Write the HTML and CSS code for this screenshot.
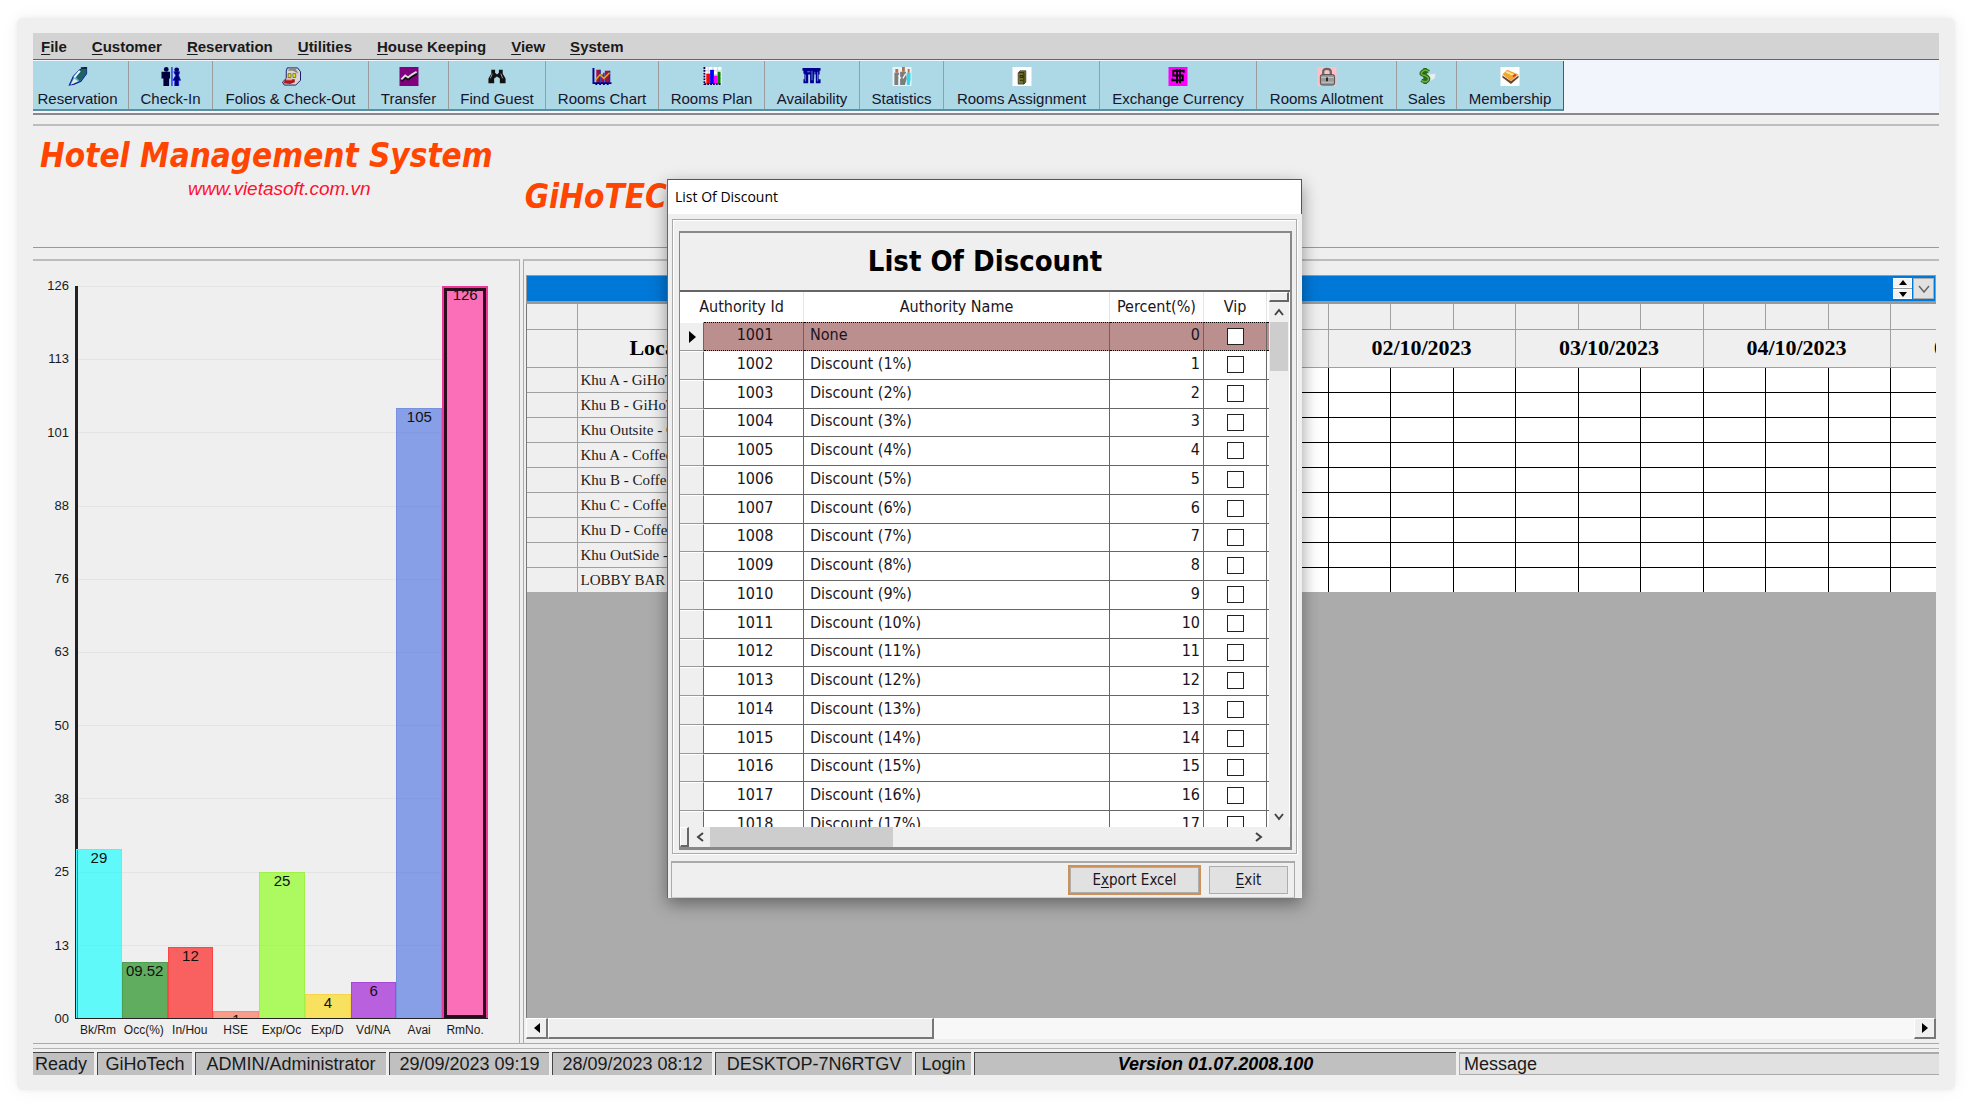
FILE: index.html
```html
<!DOCTYPE html>
<html lang="en">
<head>
<meta charset="utf-8">
<title>Hotel Management System</title>
<link rel="stylesheet" href="styles.css">
</head>
<body>
<div class="frame">
  <nav class="menubar">
    <a href="#"><u>F</u>ile</a><a href="#"><u>C</u>ustomer</a><a href="#"><u>R</u>eservation</a><a href="#"><u>U</u>tilities</a><a href="#"><u>H</u>ouse Keeping</a><a href="#"><u>V</u>iew</a><a href="#"><u>S</u>ystem</a>
  </nav>
  <div class="toolbar-row">
    <div class="toolbar">
      <button type="button">
        <svg viewBox="0 0 20 20"><path d="M1 19L5 10L12 3L19 0V7L13 15L6 18Z" fill="#5fb5bd" stroke="#0a1a9a" stroke-width="1.2"/><path d="M11 4L19 0V7L12 15L8 11Z" fill="#1f5f66"/><path d="M6 11L12 4" stroke="#e8ffff" stroke-width="2"/><path d="M6 12L10 15L2 19Z" fill="#e8e8e8"/><path d="M13 1H19" stroke="#111" stroke-width="1.5"/></svg>
        Reservation</button>
      <button type="button">
        <svg viewBox="0 0 20 20"><circle cx="5" cy="2.500" r="2.500" fill="#00004a"/><path d="M0 5H9V12H8V20H2V12H0Z" fill="#00003a"/><path d="M11 0V20" stroke="#0a0aff" stroke-width="1.200"/><circle cx="16" cy="3" r="2.500" fill="#00006a"/><path d="M13 5H19L18 9L20 14H18V20H14V14H12L15 9Z" fill="#00006a" stroke="#0a0ae0" stroke-width=".8"/></svg>
        Check-In</button>
      <button type="button">
        <svg viewBox="0 0 20 20"><path d="M6 1H17L20 5V14L15 19H3L1 16L5 12V4Z" fill="#d8d8d0" stroke="#15156a"/><path d="M6 4L10 1L15 2L18 7L12 4Z" fill="#8a8a80"/><path d="M7 7H10V11H7ZM12 7H15V11H12Z" fill="#e8e020" stroke="#333" stroke-width=".6"/><path d="M4 13H14V16L9 18L2 17Z" fill="#b01818"/><path d="M5 12H11V14H5Z" fill="#e8a0a0"/></svg>
        Folios &amp; Check-Out</button>
      <button type="button">
        <svg viewBox="0 0 20 20"><path d="M0 0H20V20H0Z" fill="#800080"/><path d="M2 15L6 11L9 13L13 10L18 7" fill="none" stroke="#111" stroke-width="2.500"/><path d="M2 13L6 9L9 11L13 8L18 5" fill="none" stroke="#ddd" stroke-width="2"/></svg>
        Transfer</button>
      <button type="button">
        <svg viewBox="0 0 20 20"><path d="M4 3H8V6L10 8L12 6V3H16V7L19 12V17H13V12L10 10L7 12V17H1V12L4 7Z" fill="#111"/><path d="M5 7L3 12M14 7L16 12" stroke="#8fa6ae" stroke-width="1"/></svg>
        Find Guest</button>
      <button type="button">
        <svg viewBox="0 0 20 20"><path d="M4 3H8V17H4ZM9 8H12V17H9ZM13 4H18V17H13Z" fill="#a01040"/><path d="M1 1V17H20M4 17V19M8 17V19M12 17V19M16 17V19" fill="none" stroke="#000090" stroke-width="2"/><path d="M8 3V16M12 6V16M18 4V16" stroke="#2828a0" stroke-width="1.500"/><path d="M3 14L8 8L12 12L18 6" fill="none" stroke="#e8a020" stroke-width="1.600"/></svg>
        Rooms Chart</button>
      <button type="button">
        <svg viewBox="0 0 20 20"><path d="M1 0H20V19H1Z" fill="#fff"/><path d="M1 4H20M1 8H20M1 12H20M6 0V18M11 0V18M16 0V18" stroke="#d0d0d0"/><path d="M4 7H8V18H4Z" fill="#f00"/><path d="M8 3H12V18H8Z" fill="#00f"/><path d="M12 9H16V18H12Z" fill="#f0f"/><path d="M16 5H19V18H16Z" fill="#008000"/><path d="M2 0V19M2 18H20" fill="none" stroke="#000050" stroke-width="2" stroke-dasharray="2 1"/></svg>
        Rooms Plan</button>
      <button type="button">
        <svg viewBox="0 0 20 20"><path d="M0 1H19V4H18V8H17V13H19V17H14V8H12V17H8V8H6V17H1V13H2V7H1V4H0Z" fill="#000090"/><path d="M5 5H8M3 8V15M10 4V14M13 5V12M16 5V15" stroke="#6a86d0" stroke-width="1"/></svg>
        Availability</button>
      <button type="button">
        <svg viewBox="0 0 20 20"><path d="M0 0H20V20H0Z" fill="#e8f4f8"/><path d="M2 6H7L6 13V19H2ZM8 5H14L15 12L13 19H8Z" fill="#7d7d7d"/><path d="M15 6H19V13L18 19H15Z" fill="#30d8e8"/><path d="M3 2H6V6H3ZM10 0H13V5H10ZM16 2H18V6H16Z" fill="#b07050"/><path d="M6 9L9 12M14 7L11 12" stroke="#fff" stroke-width="1.200"/></svg>
        Statistics</button>
      <button type="button">
        <svg viewBox="0 0 20 20"><path d="M0 0H20V20H0Z" fill="#fff"/><path d="M6 6L8 4H14V16L12 18H6Z" fill="#777522" stroke="#333" stroke-width=".8"/><path d="M7 6H12V18M8 9H11V11H8ZM8 14H11" fill="none" stroke="#22220a"/></svg>
        Rooms Assignment</button>
      <button type="button">
        <svg viewBox="0 0 20 20"><path d="M0 0H20V20H0Z" fill="#f0f"/><path d="M16 6V4H5V9H15V14H4V12M9 2V17M12 2V17" fill="none" stroke="#000" stroke-width="2"/></svg>
        Exchange Currency</button>
      <button type="button">
        <svg viewBox="0 0 20 20"><path d="M0 0H20V20H0Z" fill="#ffc0c8"/><path d="M6 9V5Q6 2 10 2T14 5V9" fill="none" stroke="#666" stroke-width="2.400"/><rect x="3" y="8" width="15" height="11" rx="2" fill="#999" stroke="#4a4a4a"/><path d="M4 11H17M4 16H17" stroke="#c8c8c8"/><path d="M10 11V15" stroke="#222" stroke-width="2"/></svg>
        Rooms Allotment</button>
      <button type="button">
        <svg viewBox="0 0 20 20"><path d="M11 8L19 7L18 12L13 15Z" fill="#e8eef0"/><path d="M12 5Q8 2 5 5T8 9Q13 11 11 14T4 14M8 1V18" fill="none" stroke="#2d6a18" stroke-width="3.800"/><path d="M12 5Q8 2 5 5T8 9Q13 11 11 14T4 14" fill="none" stroke="#6ab848" stroke-width="1.500"/></svg>
        Sales</button>
      <button type="button">
        <svg viewBox="0 0 20 20"><path d="M0 0H20V20H0Z" fill="#fff"/><path d="M2 11L11 18L19 11V9L11 15L2 9Z" fill="#6a4030"/><path d="M2 8L7 3L19 8L11 15Z" fill="#f0a830"/><path d="M6 5L15 9" stroke="#ffe8a0" stroke-width="2"/><path d="M13 10L16 8" stroke="#e03020" stroke-width="2"/></svg>
        Membership</button>
    </div>
  </div>

  <header class="banner">
    <div class="brand">
      <h1>Hotel Management System</h1>
      <a href="#">www.vietasoft.com.vn</a>
    </div>
    <div class="site-name">GiHoTECH</div>
  </header>

  <main class="workspace">
    <section class="chart">
      <div class="scale">
        <span>126</span><span>113</span><span>101</span><span>88</span><span>76</span><span>63</span><span>50</span><span>38</span><span>25</span><span>13</span><span>00</span>
      </div>
      <div class="plot">
        <div class="gridlines"><i></i><i></i><i></i><i></i><i></i><i></i><i></i><i></i><i></i><i></i></div>
        <div class="bars">
          <div class="col cyan" style="--v:29"><b>29</b></div>
          <div class="col green" style="--v:9.52"><b>09.52</b></div>
          <div class="col red" style="--v:12"><b>12</b></div>
          <div class="col salmon" style="--v:1"><b>1</b></div>
          <div class="col lime" style="--v:25"><b>25</b></div>
          <div class="col yellow" style="--v:4"><b>4</b></div>
          <div class="col purple" style="--v:6"><b>6</b></div>
          <div class="col blue" style="--v:105"><b>105</b></div>
          <div class="col pink" style="--v:126"><b>126</b></div>
        </div>
      </div>
      <div class="names">
        <span>Bk/Rm</span><span>Occ(%)</span><span>In/Hou</span><span>HSE</span><span>Exp/Oc</span><span>Exp/D</span><span>Vd/NA</span><span>Avai</span><span>RmNo.</span>
      </div>
    </section>

    <section class="schedule">
      <div class="caption">
        <div class="spin"><button type="button" aria-label="Previous"><svg viewBox="0 0 8 6"><path d="M4 0L8 5H0Z"/></svg></button><button type="button" aria-label="Next"><svg viewBox="0 0 8 6"><path d="M4 6L8 1H0Z"/></svg></button></div>
        <button type="button" class="drop" aria-label="Open list"><svg viewBox="0 0 12 8"><path d="M1 1L6 7L11 1" fill="none" stroke="#666" stroke-width="1.500"/></svg></button>
      </div>
      <div class="sheet">
        <table class="rooms">
          <colgroup id="room-cols"><col class="mark"><col class="place"></colgroup>
          <thead id="room-head"></thead>
          <tbody id="room-body"></tbody>
        </table>
      </div>
      <div class="hscroll">
        <button type="button" aria-label="Scroll left"><svg viewBox="0 0 6 10"><path d="M6 0V10L0 5Z"/></svg></button>
        <div class="thumb"></div>
        <button type="button" class="end" aria-label="Scroll right"><svg viewBox="0 0 6 10"><path d="M0 0V10L6 5Z"/></svg></button>
      </div>
    </section>
  </main>

  <footer class="status">
    <span class="ready">Ready</span><span>GiHoTech</span><span>ADMIN/Administrator</span><span>29/09/2023 09:19</span><span>28/09/2023 08:12</span><span>DESKTOP-7N6RTGV</span><span>Login</span><span class="version">Version 01.07.2008.100</span><span class="message">Message</span>
  </footer>
</div>

<section class="dialog" role="dialog" aria-label="List Of Discount">
  <div class="titlebar">List Of Discount</div>
  <div class="panel">
    <div class="box">
      <h2>List Of Discount</h2>
      <div class="listing">
        <div class="rows">
          <table class="discounts">
            <colgroup><col class="c-mark"><col class="c-id"><col class="c-name"><col class="c-pct"><col class="c-vip"><col class="c-rest"></colgroup>
            <thead><tr><th colspan="2">Authority Id</th><th>Authority Name</th><th>Percent(%)</th><th>Vip</th><th></th></tr></thead>
            <tbody id="discount-body"></tbody>
          </table>
        </div>
        <div class="vbar">
          <div class="split"></div>
          <button type="button" aria-label="Scroll up"><svg viewBox="0 0 10 8"><path d="M1 7L5 2L9 7" /></svg></button>
          <div class="vthumb"></div>
          <button type="button" class="down" aria-label="Scroll down"><svg viewBox="0 0 10 8"><path d="M1 1L5 6L9 1" /></svg></button>
        </div>
      </div>
      <div class="hbar">
        <div class="split"></div>
        <button type="button" aria-label="Scroll left"><svg viewBox="0 0 8 10"><path d="M7 1L2 5L7 9" /></svg></button>
        <div class="hthumb"></div>
        <button type="button" class="far" aria-label="Scroll right"><svg viewBox="0 0 8 10"><path d="M1 1L6 5L1 9" /></svg></button>
      </div>
    </div>
  </div>
  <div class="actions">
    <button type="button" class="primary">E<u>x</u>port Excel</button>
    <button type="button"><u>E</u>xit</button>
  </div>
</section>
<script src="script.js"></script>
</body>
</html>
```
FILE: styles.css
```css
* { box-sizing: border-box; }
body {
  margin: 0;
  padding: 18px 17px;
  background: #fff;
  color: #1a1a1a;
  font: 15px/20px "Liberation Sans", Arial, sans-serif;
  position: relative;
}
button { font: inherit; color: inherit; padding: 0; margin: 0; border: 0; background: none; }
a { color: inherit; text-decoration: none; }
svg { display: block; }

.frame {
  display: flex;
  flex-direction: column;
  min-height: calc(100vh - 36px);
  padding: 15px 16px;
  background: #efefef;
  border-radius: 6px;
  box-shadow: 0 0 4px #efefef, 0 0 18px #f2f2f2;
}

/* menu and toolbar */
.menubar {
  display: flex;
  gap: 25px;
  height: 27px;
  padding: 4px 8px 0;
  background: #d3d3d3;
  border-bottom: 1px solid #666;
  font-weight: bold;
}
u { text-underline-offset: 2px; }
.toolbar-row {
  display: flex;
  background: #f2f6fc;
  border-bottom: 2px solid #888;
  padding: 1px 0 2px;
}
.toolbar {
  display: grid;
  grid-template-columns: 96px 84px 156px 80px 97px 113px 106px 95px 84px 156px 157px 140px 60px 106px;
  background: #add8e6;
  border-bottom: 2px solid #5c8ea2;
  border-right: 1px solid #34627a;
}
.toolbar button {
  display: flex;
  flex-direction: column;
  align-items: center;
  gap: 3px;
  height: 48px;
  padding: 6px 0 0;
  border-right: 1px solid #9c9c9c;
  white-space: nowrap;
  color: #14142c;
}
.toolbar button:first-child { padding-right: 6px; }
.toolbar button:last-child { border-right: 0; }
.toolbar svg { width: 20px; height: 20px; }

/* banner */
.banner {
  display: flex;
  gap: 32px;
  height: 124px;
  margin-top: 9px;
  padding: 12px 7px;
  border-top: 2px solid #bdbdbd;
  border-bottom: 1px solid #999;
  color: #ff4500;
}
.brand { display: flex; flex-direction: column; align-items: flex-start; }
.brand h1, .site-name {
  margin: 0;
  font: italic bold 33px/36px "DejaVu Sans Condensed", Tahoma, sans-serif;
  white-space: nowrap;
}
.brand a { padding-left: 148px; color: #ff1030; font-size: 19px; line-height: 30px; font-style: italic; }
.site-name { padding-top: 41px; }

/* workspace */
.workspace {
  flex: 1;
  display: grid;
  grid-template-columns: 487px minmax(0, 1fr);
  gap: 3px;
  margin-top: 11px;
  border-bottom: 1px solid #a8a8a8;
}
.chart {
  display: grid;
  grid-template-columns: 36px 1fr;
  grid-template-rows: 1fr 20px;
  column-gap: 6px;
  padding: 25px 31px 4px 0;
  border-top: 2px solid #bdbdbd;
  border-right: 1px solid #aaa;
}
.scale {
  display: flex;
  flex-direction: column;
  justify-content: space-between;
  margin: -7px 0;
  font-size: 13px;
  line-height: 14px;
  text-align: right;
}
.plot { display: grid; border-left: 3px solid #222; border-bottom: 1px solid #222; }
.gridlines, .bars { grid-area: 1 / 1; display: flex; }
.gridlines { flex-direction: column; }
.gridlines i { flex: 1; border-top: 1px solid #e4e4e4; }
.bars { margin-left: -2px; }
.col { flex: 1 1 0; min-width: 0; display: flex; flex-direction: column; }
.col::before { content: ""; flex: calc(126 - var(--v)) 1 0; }
.col b {
  flex: var(--v) 1 0;
  min-height: 0;
  overflow: hidden;
  font-weight: normal;
  text-align: center;
  line-height: 16px;
  color: #111;
  border: 1px solid transparent;
  border-bottom: 0;
}
.cyan b { background: rgba(0, 255, 255, .6); border-color: #4ff4f8; }
.green b { background: rgba(0, 128, 0, .6); border-color: #4d9c50; }
.red b { background: rgba(255, 0, 0, .6); border-color: #fb4545; }
.salmon b { background: rgba(255, 100, 70, .6); border-color: #f58a78; }
.lime b { background: rgba(127, 255, 0, .6); border-color: #a0f048; }
.yellow b { background: rgba(255, 215, 0, .6); border-color: #f8d448; }
.purple b { background: rgba(148, 0, 211, .6); border-color: #a848d8; }
.blue b { background: rgba(65, 105, 225, .6); border-color: #7890e0; }
.pink b { background: #fb6eb8; border: 2px solid #f0389a; border-bottom: 0; box-shadow: inset 0 0 0 3px #2a0a1c; line-height: 14px; }
.names { grid-column: 2; display: flex; padding: 2px 0 0; }
.names span { flex: 1 1 0; min-width: 0; text-align: center; font-size: 12px; line-height: 18px; white-space: nowrap; }

/* schedule */
.schedule {
  display: flex;
  flex-direction: column;
  min-width: 0;
  padding: 14px 3px 4px 2px;
  border-top: 2px solid #bdbdbd;
  border-left: 1px solid #aaa;
}
.caption {
  display: flex;
  justify-content: flex-end;
  height: 29px;
  padding: 2px 1px;
  background: #0078d7;
  border: 1px solid #999;
  border-bottom: 3px solid #999;
}
.spin { display: grid; width: 19px; gap: 1px; background: #999; }
.spin button { display: grid; place-items: center; background: #f2f2f2; border: 1px solid #fff; }
.spin svg { width: 8px; height: 6px; }
.drop { display: grid; place-items: center; width: 21px; margin-left: 1px; background: #e1e1e1; border: 1px solid #adadad; }
.drop svg { width: 12px; height: 8px; }
.sheet { flex: 1; overflow: hidden; background: #ababab; border-left: 1px solid #777; min-height: 300px; }
.rooms {
  table-layout: fixed;
  width: 1551px;
  border-collapse: collapse;
  font: 15px/24px "Liberation Serif", "Times New Roman", serif;
}
.mark { width: 50px; }
.place { width: 188px; }
.slot-a { width: 63px; }
.slot-b { width: 62px; }
.rooms th, .rooms td { padding: 0; height: 25px; white-space: nowrap; overflow: hidden; }
.rooms th { background: #efefef; border: solid #a0a0a0; border-width: 0 1px 1px 0; font-weight: normal; }
.rooms tbody th { text-align: left; padding-left: 3px; }
.rooms thead tr + tr th { height: 38px; font-size: 22px; font-weight: bold; color: #000; }
.rooms td { background: #fff; border: solid #000; border-width: 0 1px 1px 0; }
.rooms tbody tr:last-child > * { border-bottom: 0; }
.hscroll { display: flex; height: 21px; background: #f8f8f8; }
.hscroll button, .thumb { background: #efefef; border: 1px solid #fff; border-right: 2px solid #777; border-bottom: 2px solid #777; }
.hscroll button { width: 22px; display: grid; place-items: center; }
.hscroll svg { width: 6px; height: 10px; }
.thumb { flex: 0 0 386px; }
.hscroll .end { margin-left: auto; }

/* status bar */
.status {
  display: grid;
  grid-template-columns: 61px 95px 191px 160px 160px 197px 56px 482px minmax(0, 1fr);
  gap: 3px;
  margin-top: 4px;
  padding-top: 3px;
  border-top: 1px solid #b4b4b4;
  font-size: 18px;
  line-height: 22px;
}
.status span {
  background: #c0c0c0;
  border-top: 1px solid #444;
  border-left: 1px solid #444;
  height: 23px;
  text-align: center;
  white-space: nowrap;
}
.status .ready { text-align: left; padding-left: 2px; border-left: 0; }
.status .version { font-weight: bold; font-style: italic; color: #000; }
.status .message { text-align: left; padding-left: 4px; background: #e1e1e1; border: 1px solid #aaa; border-top-width: 2px; border-right: 0; line-height: 21px; }

/* dialog */
.dialog {
  position: absolute;
  top: 179px;
  left: calc(50% - 319px);
  width: 635px;
  background: #efefef;
  border-left: 1px solid #666;
  box-shadow: 0 6px 16px rgba(0, 0, 0, .4);
  font: 16px/20px "DejaVu Sans Condensed", Tahoma, sans-serif;
  color: #1a1420;
}
.titlebar {
  height: 35px;
  padding: 7px 7px;
  background: #fff;
  border-top: 1px solid #555;
  border-right: 1px solid #555;
  font: 14px/20px "Open Sans", "Segoe UI", sans-serif;
  color: #000;
}
.panel { margin: 5px 5px 0 4px; padding: 11px 4px 3px 6px; border: 1px solid #aaa; box-shadow: inset 1px 1px #fff, 1px 1px #fff; }
.box { border: 2px solid #888; border-width: 2px 2px 3px 1px; }
.box h2 {
  margin: 0;
  height: 59px;
  border-bottom: 2px solid #666;
  font: bold 29px/56px "DejaVu Sans Condensed", Tahoma, sans-serif;
  text-align: center;
  color: #000;
}
.listing { display: flex; height: 535px; }
.rows { flex: 1; overflow: hidden; background: #fff; }
.discounts { table-layout: fixed; width: 100%; border-collapse: separate; border-spacing: 0; }
.c-mark { width: 24px; }
.c-id { width: 100px; }
.c-name { width: 306px; }
.c-pct { width: 94px; }
.c-vip { width: 63px; }
.discounts th { height: 30px; padding: 0; font-weight: normal; border-right: 1px solid #e4e4e4; white-space: nowrap; }
.discounts th:last-child { border: 0; }
.discounts td { height: 29px; padding: 0 0 3px; line-height: 20px; border-right: 1px solid #666; border-bottom: 1px solid #666; white-space: nowrap; }
.discounts tbody tr:nth-child(4n) td { height: 28px; }
.discounts td:first-child { background: #efefef; border-bottom-color: #999; border-top: 1px solid #fff; }
.discounts td:nth-child(2) { text-align: center; padding-left: 3px; }
.discounts td:nth-child(3) { padding-left: 6px; }
.discounts td:nth-child(4) { text-align: right; padding-right: 3px; }
.discounts td:nth-child(5) { padding-bottom: 0; }
.discounts td:last-child { border-right: 0; }
.discounts .current td { background: #bc8f8f; border-top: 1px dotted #000; border-bottom: 1px dotted #000; }
.discounts .current td:first-child { background: #efefef; border-top: 1px solid #fff; border-bottom: 1px solid #999; padding: 0; }
.current svg { width: 7px; height: 12px; margin-left: 9px; }
.discounts input { appearance: none; display: block; width: 17px; height: 17px; margin: 0 auto 1px; background: #fff; border: 1px solid #222; }
.vbar { display: flex; flex-direction: column; width: 21px; background: #efefef; border-right: 1px solid #fff; }
.vbar button, .hbar button { display: grid; place-items: center; }
.dialog svg path { fill: none; stroke: #444; stroke-width: 2; }
.dialog .current svg path { fill: #000; stroke: none; }
.vbar .split { height: 10px; background: #efefef; border: 1px solid #fff; border-right: 2px solid #666; border-bottom: 2px solid #666; }
.vbar button { height: 20px; }
.vbar svg { width: 10px; height: 8px; }
.vthumb { height: 49px; margin: 0 1px; background: #cdcdcd; }
.vbar .down { margin-top: auto; }
.hbar { display: flex; height: 20px; }
.hbar .split { width: 9px; border: 1px solid #fff; border-right: 2px solid #666; border-bottom: 2px solid #666; }
.hbar button { width: 21px; }
.hbar svg { width: 8px; height: 10px; }
.hthumb { width: 183px; background: #cdcdcd; }
.hbar .far { margin-left: auto; margin-right: 21px; }
.actions {
  display: flex;
  justify-content: flex-end;
  align-items: center;
  gap: 8px;
  height: 37px;
  margin: 7px 7px 0 3px;
  padding: 0 6px;
  border: 1px solid #aaa;
  border-top-width: 2px;
  border-bottom-color: #ccc;
  font-size: 15px;
}
.actions button { width: 79px; height: 28px; background: #e1e1e1; border: 1px solid #adadad; }
.actions .primary { width: 133px; height: 30px; border: 2px solid #cf9157; box-shadow: inset 0 0 0 1px #adadad; }
```
FILE: script.js
```js
const places = ["Khu A - GiHoTech", "Khu B - GiHoTech", "Khu Outsite - GiHoTech", "Khu A - Coffee", "Khu B - Coffee", "Khu C - Coffee", "Khu D - Coffee", "Khu OutSide - Coffee", "LOBBY BAR"];
const days = ["29/09/2023", "30/09/2023", "01/10/2023", "02/10/2023", "03/10/2023", "04/10/2023", "05/10/2023"];
const kinds = Array.from({ length: 3 * days.length }, (_, i) => i % 2 ? "slot-b" : "slot-a");

document.getElementById("room-cols").innerHTML += kinds.map(k => `<col class="${k}">`).join("");
document.getElementById("room-head").innerHTML =
  `<tr><th></th><th></th>${kinds.map(() => "<th></th>").join("")}</tr>` +
  `<tr><th></th><th>Location</th>${days.map(d => `<th colspan="3">${d}</th>`).join("")}</tr>`;
document.getElementById("room-body").innerHTML = places.map(p =>
  `<tr><th></th><th>${p}</th>${kinds.map(() => "<td></td>").join("")}</tr>`).join("");

document.getElementById("discount-body").innerHTML = Array.from({ length: 18 }, (_, n) => {
  const id = 1001 + n;
  const name = n ? `Discount (${n}%)` : "None";
  const mark = n ? "" : '<svg viewBox="0 0 7 12"><path d="M0 0V12L7 6Z"/></svg>';
  return `<tr${n ? "" : ' class="current"'}><td>${mark}</td><td>${id}</td><td>${name}</td><td>${n}</td>` +
    `<td><input type="checkbox" aria-label="Vip ${id}"></td><td></td></tr>`;
}).join("");
```
